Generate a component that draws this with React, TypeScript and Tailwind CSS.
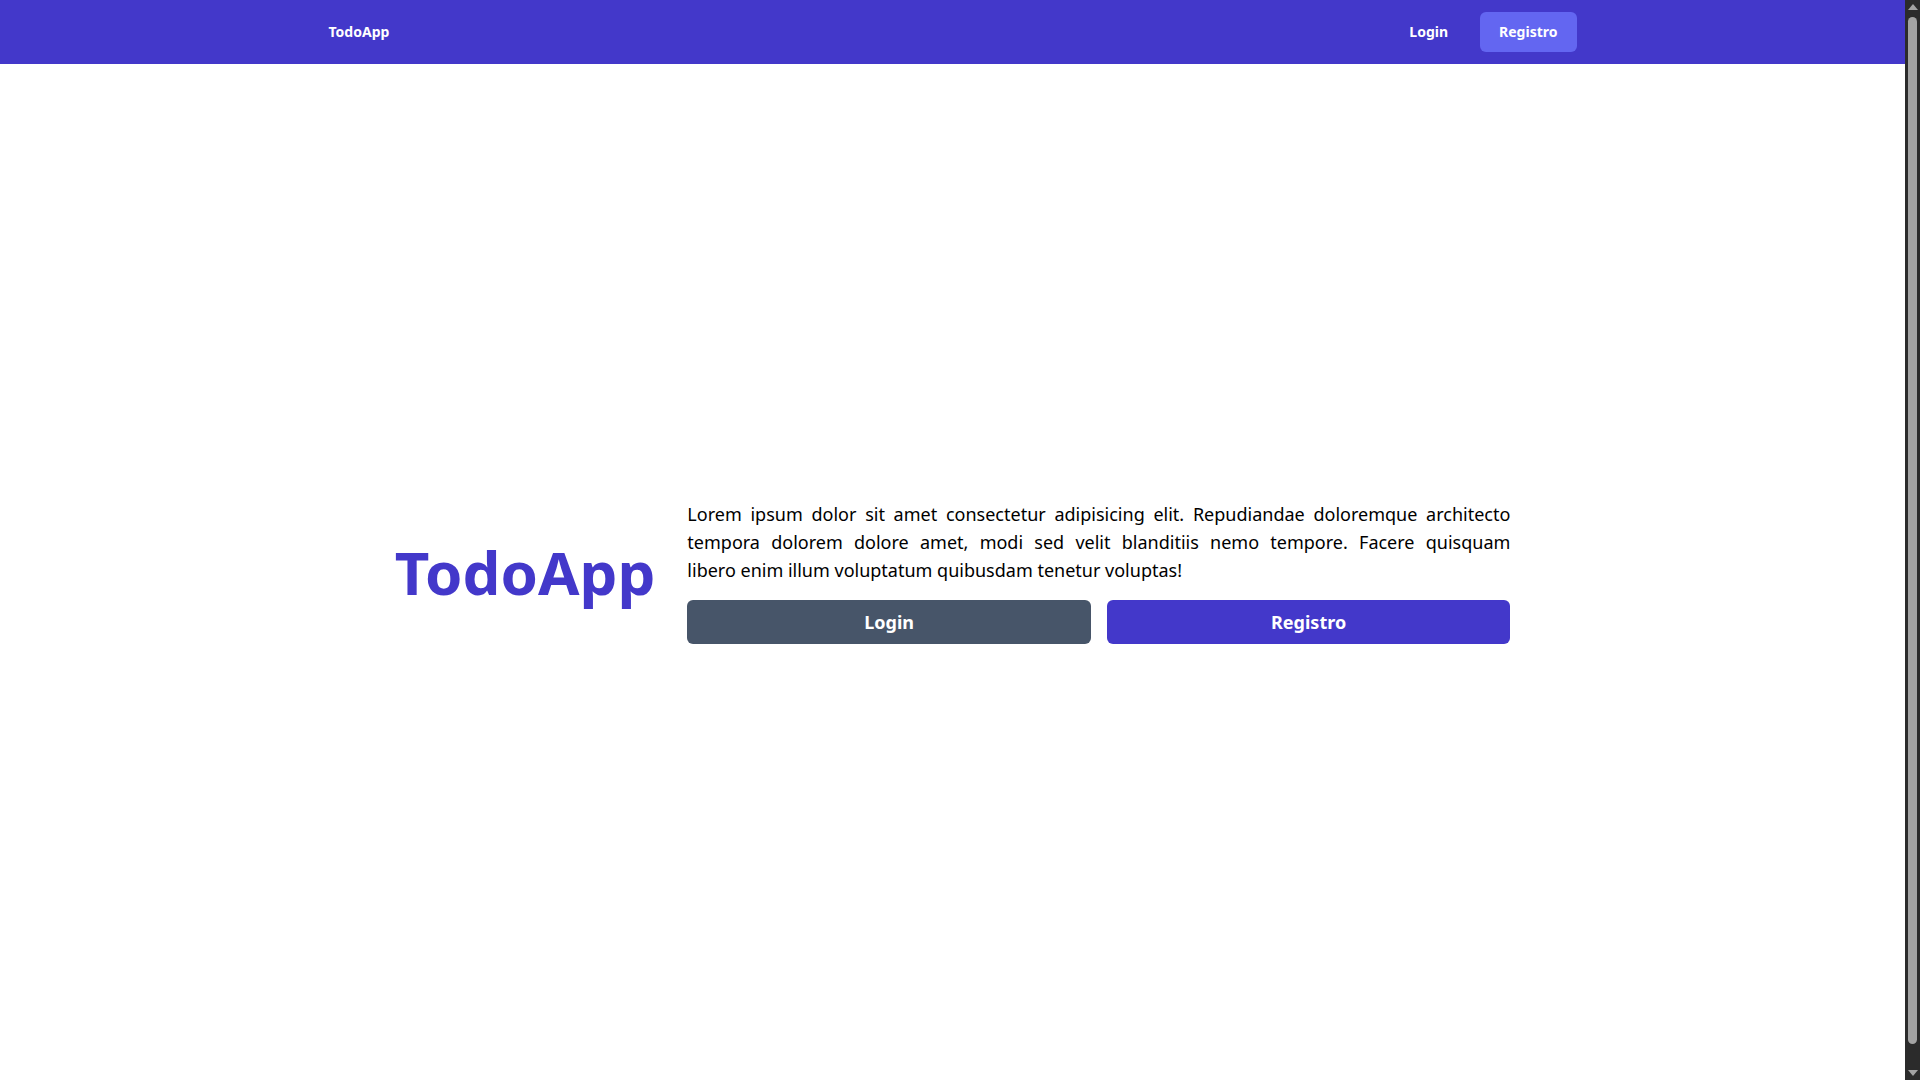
const lines = [
  "Lorem ipsum dolor sit amet consectetur adipisicing elit. Repudiandae doloremque architecto",
  "tempora dolorem dolore amet, modi sed velit blanditiis nemo tempore. Facere quisquam",
];

// Browser window scrollbar, as seen in the screenshot (the page is slightly taller than the viewport).
function WindowScrollbar() {
  return (
    <div className="fixed right-0 top-0 flex h-screen w-[15px] flex-col items-center bg-[#2b2b2b]">
      <div className="mt-[4px] h-0 w-0 border-x-[5px] border-b-[6px] border-x-transparent border-b-[#a3a3a3]" />
      <div className="mt-[7px] w-[9px] flex-1 rounded-full bg-[#a3a3a3]" />
      <div className="mt-[26px] mb-[4px] h-0 w-0 border-x-[5px] border-t-[6px] border-x-transparent border-t-[#a3a3a3]" />
    </div>
  );
}

export default function App() {
  return (
    <div className="min-h-screen bg-white pr-[15px] font-['Noto_Sans',sans-serif] text-black">
      <nav className="bg-[#4338ca]">
        <div className="mx-auto flex h-16 max-w-7xl items-center justify-between px-4">
          <a href="#" className="text-sm font-bold text-white">
            TodoApp
          </a>
          <div className="flex items-center gap-4">
            <a href="#" className="px-4 py-2.5 text-sm font-bold text-white">
              Login
            </a>
            <a href="#" className="rounded-md bg-[#6366f1] px-[19px] py-2.5 text-sm font-bold text-white">
              Registro
            </a>
          </div>
        </div>
      </nav>

      <main className="flex min-h-[1048px] items-center justify-center pb-8">
        <div className="flex items-center gap-8">
          <h1 className="text-6xl font-bold text-[#4338ca]">TodoApp</h1>
          <div className="w-[823px]">
            <p className="mb-4 text-lg">
              {lines.map((l) => (
                <span key={l} className="block text-justify [text-align-last:justify]">
                  {l}
                </span>
              ))}
              <span className="block">libero enim illum voluptatum quibusdam tenetur voluptas!</span>
            </p>
            <div className="grid grid-cols-2 gap-4">
              <button className="rounded-md bg-[#475569] py-2 text-lg font-bold text-white">Login</button>
              <button className="rounded-md bg-[#4338ca] py-2 text-lg font-bold text-white">Registro</button>
            </div>
          </div>
        </div>
      </main>

      <WindowScrollbar />
    </div>
  );
}
